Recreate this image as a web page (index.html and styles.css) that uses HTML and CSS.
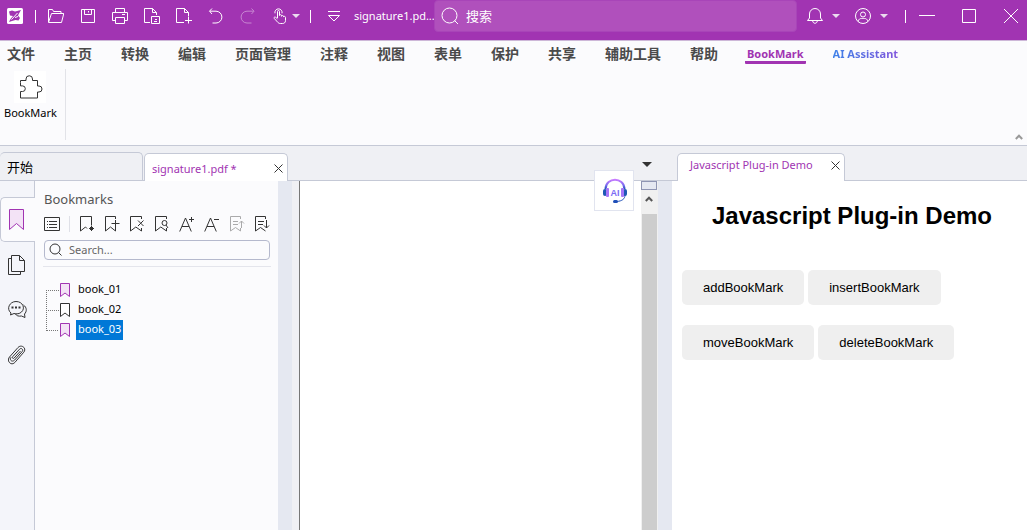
FILE: index.html
```html
<!DOCTYPE html>
<html lang="zh-CN">
<head>
<meta charset="utf-8">
<title>signature1.pdf</title>
<link rel="stylesheet" href="styles.css">
</head>
<body>
<div class="app">
  <header class="titlebar">
    <svg class="logo" width="16" height="16" viewBox="0 0 16 16"><rect width="16" height="16" rx="1.5" fill="#fff"/><path d="M2 3.500 5 2.500l3 1L14 2l-2 3.500-1 2 2 2.500-1.500 2.500-3-.5L5 13l-3 1 1.500-3L6 8 3 7.500z" fill="#a134b2"/><path d="m4.500 11.500 6-6.500M8 9.500l3-1" stroke="#fff" fill="none"/></svg>
    <span class="divider"></span>
    <div class="quick">
      <button class="icon" aria-label="打开"><svg width="16" height="16" viewBox="0 0 16 16"><path d="M.5 14V1.500h4l1 2h7.500v2M.5 14.500 3.500 5.500h12.300L13.500 14.500z"/></svg></button>
      <button class="icon" aria-label="保存"><svg width="16" height="16" viewBox="0 0 16 16"><path d="M1.500 1.500h13v13h-13zM4.500 1.500v5h7v-5M8.500 3v1.500"/></svg></button>
      <button class="icon" aria-label="打印"><svg width="16" height="16" viewBox="0 0 16 16"><path d="M3.500 4.500v-4h9v4M3.500 12.500h-3v-8h15v8h-3M3.500 9.500h9v6h-9zM10 6.500h3"/></svg></button>
      <button class="icon" aria-label="文档"><svg width="16" height="16" viewBox="0 0 16 16"><path d="M6 14.500H.5V.5h8l4 4V7M8.500.5v4h4M7.500 8.500h8v7h-8zM10 13.500h3M11 11.500h2"/></svg></button>
      <button class="icon" aria-label="新建"><svg width="16" height="16" viewBox="0 0 16 16"><path d="M8 14.500H.5V.5h8l4 4V8M8.500.5v4h4M12.500 8.500v7M9 12.500h7"/></svg></button>
      <button class="icon" aria-label="撤销"><svg width="16" height="16" viewBox="0 0 16 16"><path d="M4 .5 1.500 3.200 4 6M1.800 3.200H8a5.900 5.900 0 0 1 0 11.800H4.500"/></svg></button>
      <button class="icon" aria-label="重做" disabled><svg width="16" height="16" viewBox="0 0 16 16"><path d="M11.500.5 14 3.200 11.500 6M13.700 3.200H7A5.900 5.900 0 0 0 7 15h4.500"/></svg></button>
      <button class="icon" aria-label="手形工具"><svg width="16" height="16" viewBox="0 0 16 16"><path d="M5.500 10V3.500c0-1.500 2-1.500 2 0v4c0-1.100 2-1.100 2 0v.8c0-1.100 2-1.100 2 .1v.6c0-1 2-.8 2 .4v3.200c0 2-1.400 2.900-3 2.900H8.300c-1.300 0-2-.6-2.800-1.500L2.300 10.500c-.9-1.100.5-1.900 1.500-1.100l1.700 1.400M3 5.300A3.600 3.600 0 1 1 10 5.300"/></svg></button>
    </div>
    <button class="caret quick-caret" aria-label="更多工具"></button>
    <span class="divider"></span>
    <button class="icon menu-toggle" aria-label="自定义"><svg width="12" height="16" viewBox="0 0 12 16"><path d="M0 3.500h12M.5 7.500 6 13l5.500-5.500z"/></svg></button>
    <span class="doc-name">signature1.pd...</span>
    <label class="search"><svg width="18" height="18" viewBox="0 0 18 18"><circle cx="8.500" cy="8.500" r="7.500"/><path d="m13.500 13.500 3.500 3.500"/></svg><input type="text" placeholder="搜索" aria-label="搜索"></label>
    <button class="icon bell" aria-label="通知"><svg width="16" height="16" viewBox="0 0 16 16"><path d="M.5 12.500h15l-2-2.500V6a5.500 5.500 0 0 0-11 0v4zM5.700 13c.3 3 4.300 3 4.600 0"/></svg></button>
    <button class="caret" aria-label="通知菜单"></button>
    <button class="icon user" aria-label="账户"><svg width="16" height="16" viewBox="0 0 16 16"><circle cx="8" cy="8" r="7.500"/><circle cx="8" cy="6.500" r="2.500"/><path d="M3.200 13.500C4 10 6 10.500 8 10.500s4-.5 4.800 3"/></svg></button>
    <button class="caret" aria-label="账户菜单"></button>
    <div class="window-controls">
      <span class="divider"></span>
      <button class="icon" aria-label="最小化"><svg width="16" height="16" viewBox="0 0 16 16"><path d="M0 7.500h16"/></svg></button>
      <button class="icon" aria-label="最大化"><svg width="16" height="16" viewBox="0 0 16 16"><path d="M1.500 1.500h13v13h-13z"/></svg></button>
      <button class="icon" aria-label="关闭"><svg width="16" height="16" viewBox="0 0 16 16"><path d="m1 1 14 14M15 1 1 15"/></svg></button>
    </div>
  </header>

  <nav class="menu">
    <a href="#">文件</a><a href="#">主页</a><a href="#">转换</a><a href="#">编辑</a><a href="#">页面管理</a><a href="#">注释</a><a href="#">视图</a><a href="#">表单</a><a href="#">保护</a><a href="#">共享</a><a href="#">辅助工具</a><a href="#">帮助</a><a href="#" class="latin current">BookMark</a><a href="#" class="latin"><span class="assistant">AI Assistant</span></a>
  </nav>

  <section class="ribbon">
    <button class="ribbon-item">
      <svg width="32" height="32" viewBox="0 0 32 32"><path fill="#fff" stroke="none" d="M0 0h32v32H0z"/><path d="M6.500 11.500v-2h5.500V8a3 3 0 0 1 6.500 0v1.500H23.500v5.500h1.500a3 3 0 0 1 0 6h-1.500v6h-17v-6.500h2a2.800 2.800 0 0 0 0-5.600h-2z"/></svg>
      BookMark
    </button>
    <button class="collapse" aria-label="收起"><svg width="8" height="6" viewBox="0 0 8 6"><path d="M.8 5 4 1.700 7.200 5"/></svg></button>
  </section>

  <main class="workspace">
    <section class="document">
      <div class="tabs">
        <button class="tab start-tab">开始</button>
        <div class="tab active">signature1.pdf *<button class="close" aria-label="关闭标签"><svg width="9" height="9" viewBox="0 0 9 9"><path d="m.5.5 8 8M8.500.5l-8 8"/></svg></button></div>
        <button class="caret tabs-caret" aria-label="标签列表"></button>
      </div>
      <div class="document-body">
        <aside class="rail">
          <button class="rail-item selected" aria-label="书签"><svg width="16" height="22" viewBox="0 0 16 22"><path d="M.5.5h14v20l-7-6-7 6z" fill="#f3e3f6" stroke="#a134b2"/></svg></button>
          <button class="rail-item" aria-label="页面"><svg width="18" height="22" viewBox="0 0 18 22"><path d="M3.500 4.500h-3v16h12v-3M3.500 1.500h8l5 5v11h-13zM11.500 1.500v5h5"/></svg></button>
          <button class="rail-item" aria-label="注释"><svg width="20" height="20" viewBox="0 0 20 20"><path d="M3 13C-2 9 1.500 1.500 8 1.500c7 0 9.500 7 5.500 10.500-2 2-5 2.200-7.500 1.500l-3.500 1.500zM15.500 5c3.500 2.500 3.500 6.500 1 9l.5 3.500-3.500-1.500c-3 .5-5-.2-6-2"/><path d="M3.500 7.500h2M7 7.500h2M10.500 7.500h2" stroke-width="2"/></svg></button>
          <button class="rail-item" aria-label="附件"><svg width="18" height="20" viewBox="0 0 18 20"><path d="M12.500 6 6.200 13c-1 1.100-2.500-.1-1.500-1.300l6.800-7.500c1.700-1.800 4.300.3 2.700 2.300l-7.500 8.500c-2.500 2.700-5.800-.2-3.700-2.700M1.500 12 10 2.500c3.500-3.700 9 .8 5.800 4.700l-9 10.300C3.300 21.200-1.800 16.200 1.500 12z"/></svg></button>
        </aside>
        <section class="bookmarks">
          <h2>Bookmarks</h2>
          <div class="toolbar">
            <button class="tool" aria-label="选项"><svg width="16" height="16" viewBox="0 0 16 16"><path d="M.5 1.500h15v13H.5zM5 5.500h8M5 8.500h8M5 11.500h8M3 5.500h1M3 8.500h1M3 11.500h1"/></svg></button>
            <span class="tool-divider"></span>
            <button class="tool" aria-label="新建书签"><svg width="16" height="16" viewBox="0 0 16 16"><path d="M8 12.500 6.500 11 1.500 15V.5h11v9"/><path d="M12.500 10v5M10 12.500h5M11 11l3 3M14 11l-3 3"/></svg></button>
            <button class="tool" aria-label="添加书签"><svg width="16" height="16" viewBox="0 0 16 16"><path d="M11.500 3V.5h-10V15l5-4 5 4v-3M11.500 4v8M7.500 7.500h8"/></svg></button>
            <button class="tool" aria-label="删除书签"><svg width="16" height="16" viewBox="0 0 16 16"><path d="M12.500 3V.5h-11V15l5.300-4 5.700 4v-3M9 4.500l5.500 5.500M14.500 4.500 9 10"/></svg></button>
            <button class="tool" aria-label="查找书签"><svg width="16" height="16" viewBox="0 0 16 16"><path d="M12.500 3V.5h-11V15l5.300-4 5.700 4v-3"/><circle cx="10.500" cy="7" r="2.500"/><path d="m12 9 2 3"/></svg></button>
            <button class="tool" aria-label="放大文字"><svg width="16" height="16" viewBox="0 0 16 16"><path d="M.7 15.500 6.500 2l5.800 13.500M3 10.500h7M12.500 1v5M10 3.500h5"/></svg></button>
            <button class="tool" aria-label="缩小文字"><svg width="16" height="16" viewBox="0 0 16 16"><path d="M.7 15.500 6.500 2l5.800 13.500M3 10.500h7M10 3.500h5"/></svg></button>
            <button class="tool" aria-label="上一级" disabled><svg width="16" height="16" viewBox="0 0 16 16"><path d="M11.500 3V.5h-10V15l5-3.500 5 3.500v-3M4 5.500h5M4 8.500h5M12.500 12V5M10 7.500 12.500 5 15 7.500"/></svg></button>
            <button class="tool" aria-label="下一级"><svg width="16" height="16" viewBox="0 0 16 16"><path d="M11.500 3V.5h-10V15l5-3.500 5 3.500M4 5.500h6M4 8.500h5M12.500 4v8M10 9.500l2.500 2.500 2.500-2.500"/></svg></button>
          </div>
          <label class="find"><svg width="14" height="14" viewBox="0 0 14 14"><circle cx="6" cy="6" r="5"/><path d="m9.500 9.500 3 3"/></svg><input type="text" placeholder="Search..." aria-label="Search"></label>
          <ul class="tree">
            <li><svg width="10" height="15" viewBox="0 0 10 15"><path d="M.5.500h9v13L5 10 .5 13.500z" fill="#f3e3f6" stroke="#a134b2"/></svg><span>book_01</span></li>
            <li><svg width="10" height="15" viewBox="0 0 10 15"><path d="M.5.500h9v13L5 10 .5 13.500z" fill="#fff"/></svg><span>book_02</span></li>
            <li><svg width="10" height="15" viewBox="0 0 10 15"><path d="M.5.500h9v13L5 10 .5 13.500z" fill="#f3e3f6" stroke="#a134b2"/></svg><span class="picked">book_03</span></li>
          </ul>
        </section>
        <div class="page-view"></div>
        <div class="scrollbar">
          <div class="split-handle"></div>
          <button class="scroll-up" aria-label="向上滚动"><svg width="8" height="6" viewBox="0 0 8 6"><path d="M.8 5 4 1.700 7.200 5"/></svg></button>
          <div class="thumb"></div>
        </div>
      </div>
      <button class="ai-float" aria-label="AI">
        <svg width="26" height="26" viewBox="0 0 26 26"><defs><linearGradient id="band" x1="0" x2="0" y1="0" y2="1"><stop offset="0" stop-color="#c77bff"/><stop offset=".6" stop-color="#7c6cf0"/><stop offset="1" stop-color="#1f4fb8"/></linearGradient></defs><path d="M3.500 11C4-1.500 22-1.500 22.500 11" fill="none" stroke="url(#band)" stroke-width="2"/><rect x="1" y="11" width="4" height="7" rx="2" fill="#1d58b5"/><rect x="21" y="11" width="4" height="7" rx="2" fill="#1d58b5"/><rect x="4" y="10" width="3" height="9" rx="1" fill="#a675f8"/><rect x="19" y="10" width="3" height="9" rx="1" fill="#a675f8"/><path d="M23 17c0 4-3 6-8 6.500" fill="none" stroke="#1f4fb8"/><rect x="11" y="22" width="5" height="3" rx="1.500" fill="#1f4fb8"/><text x="13" y="18" class="ai-text">AI</text></svg>
      </button>
    </section>

    <section class="plugin">
      <div class="tabs">
        <div class="tab active">Javascript Plug-in Demo<button class="close" aria-label="关闭标签"><svg width="9" height="9" viewBox="0 0 9 9"><path d="m.5.5 8 8M8.500.5l-8 8"/></svg></button></div>
      </div>
      <div class="plugin-body">
        <h1>Javascript Plug-in Demo</h1>
        <div class="actions"><button>addBookMark</button><button>insertBookMark</button></div>
        <div class="actions"><button>moveBookMark</button><button>deleteBookMark</button></div>
      </div>
    </section>
  </main>
</div>
</body>
</html>
```
FILE: styles.css
```css
* { box-sizing: border-box; }
body {
  margin: 0;
  color: #333;
  font: 11px/16px "Noto Sans", "Noto Sans CJK SC", sans-serif;
}
button {
  margin: 0;
  padding: 0;
  border: 0;
  background: none;
  color: inherit;
  font: inherit;
}
svg {
  display: block;
  flex: none;
  fill: none;
  stroke: #333;
}
.app {
  display: flex;
  flex-direction: column;
  min-height: 100vh;
}

/* Title bar */
.titlebar {
  display: flex;
  align-items: center;
  height: 41px;
  padding: 0 8px 8px 7px;
  border-bottom: 1px solid #cdb7d8;
  background: #a134b2;
  color: #fff;
}
.titlebar svg { stroke: #fff; }
.titlebar .logo { stroke: none; }
.divider {
  flex: none;
  width: 1px;
  height: 13px;
  margin: 0 12px;
  background: #fff;
}
.quick { display: flex; gap: 16px; }
.icon { flex: none; }
.icon:disabled { opacity: 0.4; }
.caret {
  flex: none;
  width: 8px;
  height: 4px;
  margin: 0 0 0 9px;
  background: #eadcee;
  clip-path: polygon(0 0, 100% 0, 50% 100%);
}
.quick-caret { margin: 0 -2px 0 4px; }
.menu-toggle { margin: 0 14px 0 5px; }
.doc-name { width: 80px; }
.search {
  display: flex;
  flex: 1;
  align-items: center;
  gap: 7px;
  height: 32px;
  padding: 0 6px;
  border: 1px solid #a845b8;
  border-radius: 4px;
  background: #b050bc;
}
.search input {
  flex: 1;
  min-width: 0;
  padding: 0;
  border: 0;
  outline: 0;
  background: none;
  color: #fff;
  font: 13px/20px "Noto Sans CJK SC", sans-serif;
}
.search input::placeholder { color: #fff; opacity: 1; }
.bell { margin-left: 10px; }
.user { margin-left: 15px; }
.window-controls {
  display: flex;
  align-items: center;
  gap: 26px;
  margin-left: 17px;
}
.window-controls .divider { margin: 0 -13px 0 0; }

/* Menu */
.menu {
  display: flex;
  gap: 29px;
  height: 26px;
  padding: 0 7px;
  background: #fbfbfd;
}
.menu a {
  color: #4a4a4a;
  font: bold 14px/24px "Noto Sans CJK SC", sans-serif;
  text-decoration: none;
  white-space: nowrap;
}
.menu .latin { font: bold 11px/26px "Noto Sans", sans-serif; }
.menu .current {
  height: 23px;
  margin: 0 -2px;
  padding: 0 2px;
  border-bottom: 3px solid #a134b2;
  border-radius: 1px;
  color: #a134b2;
}
.assistant {
  background: linear-gradient(90deg, #3f82e8, #8055dc);
  background-clip: text;
  color: transparent;
}

/* Ribbon */
.ribbon {
  display: flex;
  justify-content: space-between;
  height: 79px;
  padding: 2px 4px 5px 0;
  border-bottom: 1px solid #c5c9d6;
  background: #fbfbfd;
}
.ribbon-item {
  display: flex;
  flex-direction: column;
  align-items: center;
  gap: 2px;
  padding: 2px 8px 0 4px;
  border-right: 1px solid #e2e3e8;
  color: #000;
}
.collapse { align-self: flex-end; }
.collapse svg { stroke: #999; stroke-width: 2; }

/* Workspace and tabs */
.workspace {
  display: grid;
  flex: 1;
  grid-template-columns: minmax(0, 1fr) 369px;
}
.document, .plugin {
  position: relative;
  display: flex;
  flex-direction: column;
}
.tabs {
  display: flex;
  align-items: flex-end;
  gap: 1px;
  height: 35px;
  border-bottom: 1px solid #c5c9d6;
  background: #eff0f4;
}
.tab {
  width: 143px;
  height: 28px;
  border: 1px solid #c5c9d6;
  border-bottom: 0;
  border-radius: 5px 5px 0 0;
}
.start-tab {
  padding-left: 7px;
  border-left: 0;
  color: #000;
  font: 13px/24px "Noto Sans CJK SC", sans-serif;
  text-align: left;
}
.tab.active {
  display: flex;
  align-items: center;
  justify-content: space-between;
  width: 144px;
  margin-bottom: -1px;
  padding: 2px 4px 0 7px;
  background: #fff;
  color: #a134b2;
}
.plugin .tabs { padding-left: 19px; }
.plugin .tab.active {
  width: 168px;
  padding: 0 4px 5px 12px;
}
.caret.tabs-caret {
  width: 10px;
  height: 5px;
  margin: 0 6px 13px auto;
  background: #333;
}

/* Document area */
.document-body {
  display: flex;
  flex: 1;
  background: #e5e8f1;
}
.rail {
  display: flex;
  flex-direction: column;
  width: 35px;
  padding-top: 16px;
  background: linear-gradient(#c5c9d6, #c5c9d6) right / 1px 100% no-repeat #f4f5fa;
}
.rail-item {
  display: flex;
  align-items: center;
  height: 45px;
  padding-left: 8px;
}
.rail-item.selected {
  border: 1px solid #c5c9d6;
  border-right: 0;
  border-radius: 5px 0 0 5px;
  background: #fbfbfd;
}
.bookmarks {
  width: 243px;
  padding: 8px 8px 0 9px;
  background: #fbfbfd;
}
.bookmarks h2 {
  margin: 0 0 7px;
  color: #555;
  font-size: 13px;
  font-weight: normal;
  line-height: 20px;
}
.toolbar {
  display: flex;
  align-items: center;
  gap: 9px;
}
.tool-divider {
  width: 1px;
  height: 16px;
  background: #dfe0e7;
}
.tool:disabled { opacity: 0.4; }
.find {
  display: flex;
  align-items: center;
  gap: 6px;
  height: 20px;
  margin-top: 8px;
  padding: 0 4px;
  border: 1px solid #b5b9cd;
  border-radius: 4px;
}
.find input {
  flex: 1;
  min-width: 0;
  padding: 0;
  border: 0;
  outline: 0;
  background: none;
  font: inherit;
}
.find input::placeholder { color: #666; opacity: 1; }
.tree {
  margin: 6px -1px 0;
  padding: 13px 0 0 3px;
  border-top: 1px solid #e4e5ec;
  list-style: none;
}
.tree li {
  position: relative;
  display: flex;
  align-items: center;
  gap: 6px;
  height: 20px;
  padding-left: 14px;
}
.tree li::before {
  position: absolute;
  top: 10px;
  left: 0;
  width: 12px;
  height: 20px;
  border-top: 1px dotted #777;
  border-left: 1px dotted #777;
  content: "";
}
.tree li:last-child::before { border-left: 0; }
.tree span {
  padding: 0 2px 2px;
  color: #000;
  line-height: 18px;
}
.tree .picked { background: #0078d7; color: #fff; }
.page-view {
  flex: 1;
  margin-left: 14px;
  border-left: 7px solid #f0f0f4;
  background: linear-gradient(#777, #777) left / 1px 100% no-repeat #fff;
}
.scrollbar {
  display: flex;
  flex-direction: column;
  width: 17px;
  padding: 0 1px 0 0;
  background: #f0f0f0;
}
.split-handle {
  height: 9px;
  border: 1px solid #8f95b3;
  background: #e5e8f1;
}
.scroll-up {
  display: flex;
  align-items: center;
  justify-content: center;
  height: 24px;
  padding-bottom: 6px;
}
.scroll-up svg { stroke: #555; stroke-width: 2; }
.thumb { flex: 1; margin-left: 1px; background: #cdcdcd; }
.ai-float {
  position: absolute;
  top: 24px;
  right: 24px;
  display: flex;
  align-items: center;
  justify-content: center;
  width: 40px;
  height: 41px;
  padding-left: 2px;
  border: 1px solid #e1e4ef;
  background: #fff;
}
.ai-float svg { stroke: none; }
.ai-text {
  fill: #7b6cf5;
  font: bold 9px "Liberation Sans", sans-serif;
  text-anchor: middle;
}

/* Plug-in pane */
.plugin-body {
  flex: 1;
  padding: 20px 5px 0 10px;
  border-left: 14px solid #e5e8f1;
  background: #fff;
  font-family: "Liberation Sans", sans-serif;
}
.plugin-body h1 {
  margin: 0 0 39px;
  color: #000;
  font-size: 24px;
  line-height: 30px;
  text-align: center;
}
.actions {
  display: flex;
  gap: 4px;
  margin-bottom: 20px;
}
.actions button {
  height: 35px;
  padding: 0 21px;
  border-radius: 5px;
  background: #efefef;
  color: #000;
  font-size: 13px;
}
```
